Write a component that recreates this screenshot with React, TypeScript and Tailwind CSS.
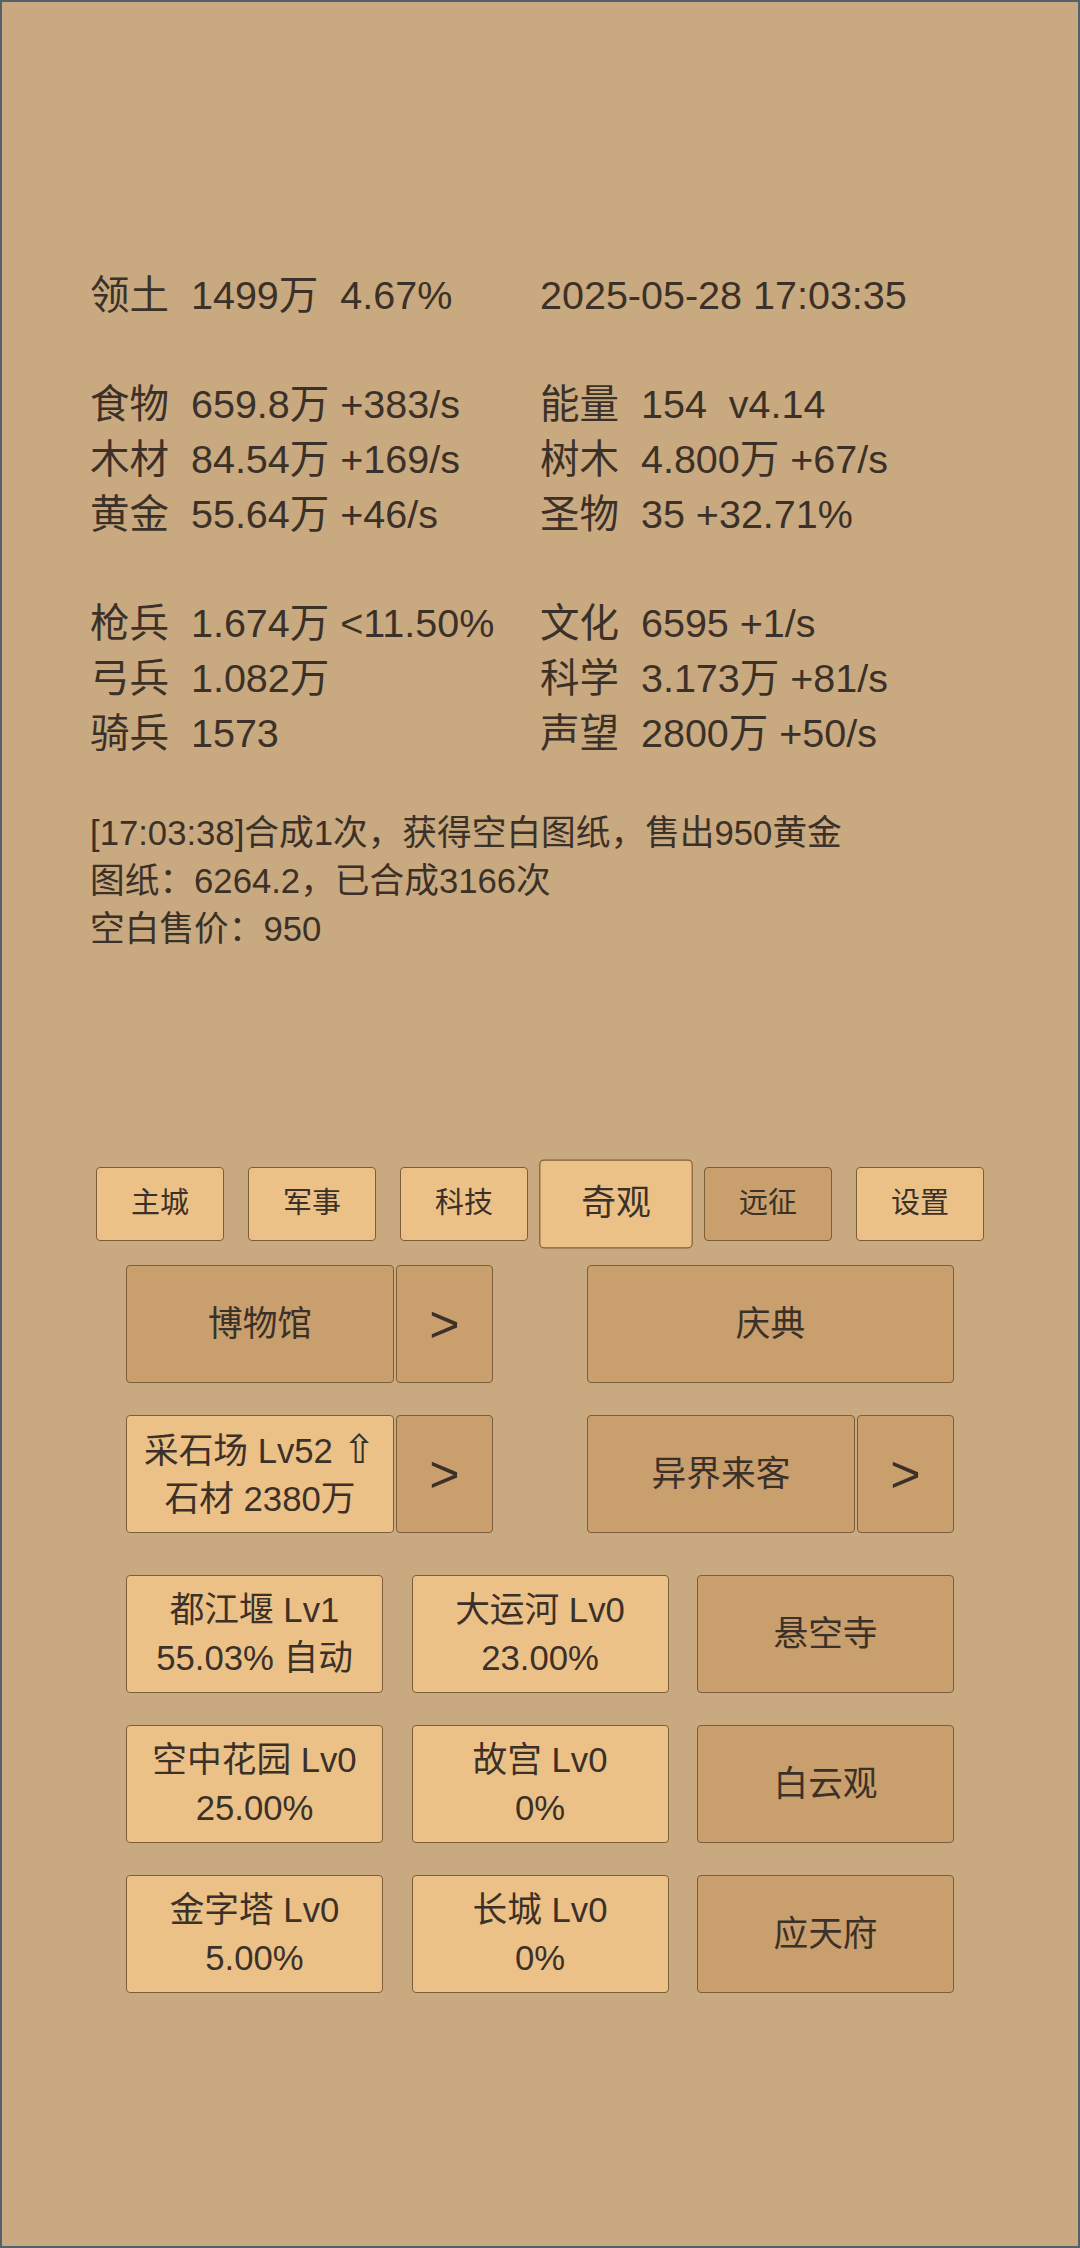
import React from "react";

const FONT = { fontFamily: '"Liberation Sans", "Noto Sans CJK SC", sans-serif' };

function Box({
  light,
  children,
  className = "",
}: {
  light?: boolean;
  children: React.ReactNode;
  className?: string;
}) {
  return (
    <div
      className={`flex flex-col items-center justify-center rounded-[4px] border-[1.5px] border-[#7d5e3a] text-center text-[34.7px] leading-[48px] text-[#3b3128] ${
        light ? "bg-[#ecc187]" : "bg-[#c99f6d]"
      } ${className}`}
    >
      {children}
    </div>
  );
}

function Arrow() {
  return (
    <Box className="h-[118px] w-[97px]">
      <span className="text-[52px] leading-none">&gt;</span>
    </Box>
  );
}

const stats: [string, string][] = [
  ["领土  1499万  4.67%", "2025-05-28 17:03:35"],
  ["", ""],
  ["食物  659.8万 +383/s", "能量  154  v4.14"],
  ["木材  84.54万 +169/s", "树木  4.800万 +67/s"],
  ["黄金  55.64万 +46/s", "圣物  35 +32.71%"],
  ["", ""],
  ["枪兵  1.674万 <11.50%", "文化  6595 +1/s"],
  ["弓兵  1.082万", "科学  3.173万 +81/s"],
  ["骑兵  1573", "声望  2800万 +50/s"],
];

const tabs = ["主城", "军事", "科技", "奇观", "远征", "设置"];

export default function App() {
  return (
    <div
      style={FONT}
      className="box-border min-h-[2248px] w-[1080px] border-2 border-[#56606d] bg-[#c9a97f] text-[#3b3128]"
    >
      <div className="pl-[88px] pt-[266px]">
        <div className="grid grid-cols-[450px_auto] text-[39.5px] leading-[54.7px] whitespace-pre">
          {stats.map(([a, b], i) => (
            <React.Fragment key={i}>
              <div className="h-[54.7px]">{a}</div>
              <div className="h-[54.7px]">{b}</div>
            </React.Fragment>
          ))}
        </div>
        <div className="mt-[49px] text-[34.7px] leading-[48px]">
          <div>[17:03:38]合成1次，获得空白图纸，售出950黄金</div>
          <div>图纸：6264.2，已合成3166次</div>
          <div>空白售价：950</div>
        </div>
      </div>

      <div className="mt-[214px] flex justify-center">
        {tabs.map((t) => {
          const selected = t === "奇观";
          const dark = t === "远征";
          return (
            <div
              key={t}
              className={`mx-[12px] flex h-[74px] w-[128px] items-center justify-center rounded-[4px] border-[1.5px] border-[#7d5e3a] text-[29px] ${
                dark ? "bg-[#c99f6d]" : "bg-[#ecc187]"
              } ${selected ? "scale-120" : ""}`}
            >
              {t}
            </div>
          );
        })}
      </div>

      <div className="ml-[124px] mt-[24px] flex w-[828px] flex-col gap-[32px]">
        <div className="flex justify-between">
          <div className="flex gap-[2px]">
            <Box className="h-[118px] w-[268px]">博物馆</Box>
            <Arrow />
          </div>
          <Box className="h-[118px] w-[367px]">庆典</Box>
        </div>
        <div className="flex justify-between">
          <div className="flex gap-[2px]">
            <Box light className="h-[118px] w-[268px]">
              <div>
                采石场 Lv52{" "}
                <span style={{ fontFamily: '"DejaVu Sans", sans-serif' }} className="text-[40px]">
                  ⇧
                </span>
              </div>
              <div>石材 2380万</div>
            </Box>
            <Arrow />
          </div>
          <div className="flex gap-[2px]">
            <Box className="h-[118px] w-[268px]">异界来客</Box>
            <Arrow />
          </div>
        </div>
      </div>

      <div className="ml-[124px] mt-[42px] grid w-[828px] grid-cols-3 gap-x-[28.5px] gap-y-[32px]">
        <Box light className="h-[118px]">
          <div>都江堰 Lv1</div>
          <div>55.03% 自动</div>
        </Box>
        <Box light className="h-[118px]">
          <div>大运河 Lv0</div>
          <div>23.00%</div>
        </Box>
        <Box className="h-[118px]">悬空寺</Box>
        <Box light className="h-[118px]">
          <div>空中花园 Lv0</div>
          <div>25.00%</div>
        </Box>
        <Box light className="h-[118px]">
          <div>故宫 Lv0</div>
          <div>0%</div>
        </Box>
        <Box className="h-[118px]">白云观</Box>
        <Box light className="h-[118px]">
          <div>金字塔 Lv0</div>
          <div>5.00%</div>
        </Box>
        <Box light className="h-[118px]">
          <div>长城 Lv0</div>
          <div>0%</div>
        </Box>
        <Box className="h-[118px]">应天府</Box>
      </div>
    </div>
  );
}
